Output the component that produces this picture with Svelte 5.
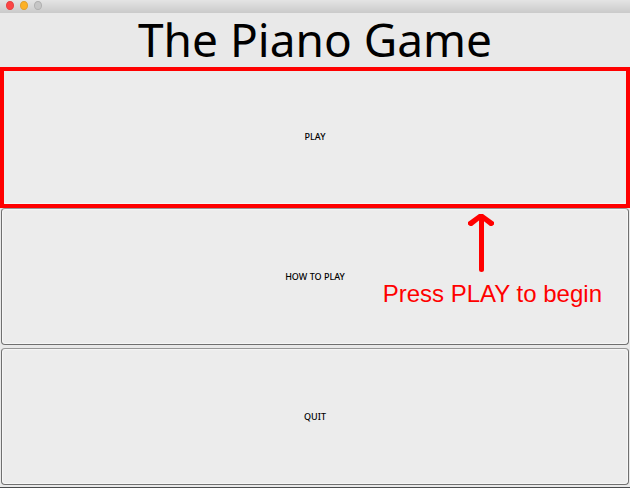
<script>
  const items = [
    { label: 'PLAY', highlighted: true },
    { label: 'HOW TO PLAY', hint: 'Press PLAY to begin' },
    { label: 'QUIT' }
  ];
</script>

<div class="window">
  <header class="titlebar">
    <button class="dot close" aria-label="Close"></button>
    <button class="dot minimize" aria-label="Minimize"></button>
    <button class="dot zoom" aria-label="Zoom" disabled></button>
  </header>
  <h1>The Piano Game</h1>
  <main>
    {#each items as item}
      <div class="cell" class:highlighted={item.highlighted}>
        <button class="choice">{item.label}</button>
        {#if item.hint}
          <div class="hint">
            <svg width="28" height="58" viewBox="0 0 28 58" aria-hidden="true">
              <path d="M14.5 3V55.5" stroke-width="5" stroke-linecap="round" />
              <path d="M1 10.5V8L10 1.5L12 0H16L18 1.5L27 8V10.5L25 12H23L16 6.5H12L5 12H3Z" fill="#f00" stroke="none" />
            </svg>
            <span>{item.hint}</span>
          </div>
        {/if}
      </div>
    {/each}
  </main>
</div>

<style>
  :global(body) {
    margin: 0;
  }
  .window {
    box-sizing: border-box;
    display: flex;
    flex-direction: column;
    min-height: 100vh;
    background: #e9e9e9;
    border-bottom: 1px solid #4a4c4e;
  }
  .titlebar {
    box-sizing: border-box;
    display: flex;
    gap: 6px;
    height: 13px;
    padding: 1px 6px;
    background: linear-gradient(#e4e4e4, #cacaca);
  }
  .dot {
    box-sizing: border-box;
    width: 8px;
    height: 9px;
    padding: 0;
    border: 1px solid;
    border-radius: 50%;
  }
  .close {
    background: #fc4545;
    border-color: #e64343;
  }
  .minimize {
    background: #fdb125;
    border-color: #dfa02f;
  }
  .zoom {
    background: #c6c6c6;
    border-color: #b0b0b0;
  }
  h1 {
    margin: 0;
    padding-bottom: 2px;
    font: 400 46px/52px "Noto Sans", "Open Sans", sans-serif;
    text-align: center;
    color: #000;
  }
  main {
    flex: 1;
    display: flex;
    flex-direction: column;
  }
  .cell {
    position: relative;
    flex: 1;
    display: flex;
    min-height: 80px;
    padding: 1px 1px 2px;
    box-sizing: border-box;
  }
  .choice {
    flex: 1;
    padding: 0;
    border: 1px solid #707070;
    border-top-color: #989898;
    border-radius: 4px;
    background: #ececec;
    box-shadow: inset 0 0 1px 1px #f8f8f8;
    font: 500 9px/12px "Noto Sans", "Open Sans", sans-serif;
    color: #000;
  }
  .highlighted {
    z-index: 1;
  }
  .highlighted::after {
    content: "";
    position: absolute;
    inset: 0 0 -1px;
    border: 4px solid #f00;
    pointer-events: none;
  }
  .hint {
    position: absolute;
    top: 7px;
    right: 28px;
    display: flex;
    flex-direction: column;
    align-items: center;
    gap: 8px;
    font: 24px/28px "Liberation Sans", Arial, sans-serif;
    color: #f00;
    pointer-events: none;
  }
  .hint svg {
    margin-right: 22px;
    fill: none;
    stroke: #f00;
  }
</style>
